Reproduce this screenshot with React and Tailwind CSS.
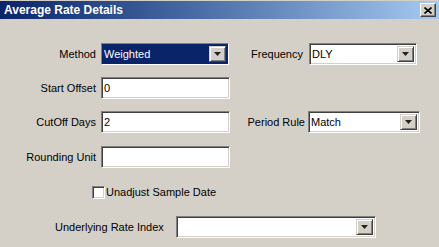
import React from "react";

const font = { fontFamily: '"Liberation Sans", Arial, sans-serif' };

const sunken =
  "border border-t-[#808080] border-l-[#808080] border-b-white border-r-white shadow-[inset_1px_1px_0_#404040,inset_-1px_-1px_0_#d4d0c8]";

const DropButton = () => (
  <div className="absolute right-[2px] top-[2px] bottom-[2px] w-[17px] bg-[#d4d0c8] border border-t-[#d4d0c8] border-l-[#d4d0c8] border-b-[#404040] border-r-[#404040] shadow-[inset_1px_1px_0_#fff,inset_-1px_-1px_0_#808080] flex items-center justify-center">
    <svg width="7" height="4" viewBox="0 0 7 4">
      <path d="M0 0h7L3.5 4z" fill="#222" />
    </svg>
  </div>
);

const Combo = ({ value, width, selected }) => (
  <div className={`relative h-[22px] bg-white ${sunken}`} style={{ width }}>
    <div
      className={`h-full flex items-center pl-[2px] pr-[20px] text-[11px] ${
        selected ? "bg-[#0a246a] text-white" : "text-black"
      }`}
    >
      {value}
    </div>
    <DropButton />
  </div>
);

const Input = ({ value }) => (
  <div className={`h-[22px] w-[129px] bg-white flex items-center pl-[2px] text-[11px] text-black ${sunken}`}>
    {value}
  </div>
);

const Label = ({ children, w }) => (
  <div className="text-[11px] text-black text-right shrink-0" style={{ width: w }}>
    {children}
  </div>
);

export default function App() {
  return (
    <div className="w-[439px] h-[247px] bg-[#d4d0c8] overflow-hidden" style={font}>
      <div className="h-[18px] mt-[1px] bg-gradient-to-r from-[#0a246a] to-[#a6caf0] flex items-center justify-between pl-[4px] pr-[3px]">
        <span className="text-white font-bold text-[12px] leading-none">Average Rate Details</span>
        <div className="w-[16px] h-[14px] bg-[#d4d0c8] border border-t-white border-l-white border-b-[#404040] border-r-[#404040] shadow-[inset_-1px_-1px_0_#808080] flex items-center justify-center">
          <svg width="8" height="7" viewBox="0 0 8 7">
            <path d="M0.5 0.5L7.5 6.5M7.5 0.5L0.5 6.5" stroke="#000" strokeWidth="1.6" />
          </svg>
        </div>
      </div>

      <div className="pt-[24px] flex flex-col">
        <div className="flex items-center h-[22px]">
          <Label w={96}>Method</Label>
          <div className="ml-[5px]">
            <Combo value="Weighted" width={128} selected />
          </div>
          <Label w={74}>Frequency</Label>
          <div className="ml-[6px]">
            <Combo value="DLY" width={108} />
          </div>
        </div>

        <div className="flex items-center h-[22px] mt-[12px]">
          <Label w={96}>Start Offset</Label>
          <div className="ml-[5px]">
            <Input value="0" />
          </div>
        </div>

        <div className="flex items-center h-[22px] mt-[12px]">
          <Label w={96}>CutOff Days</Label>
          <div className="ml-[5px]">
            <Input value="2" />
          </div>
          <Label w={75}>Period Rule</Label>
          <div className="ml-[3px]">
            <Combo value="Match" width={112} />
          </div>
        </div>

        <div className="flex items-center h-[22px] mt-[13px]">
          <Label w={96}>Rounding Unit</Label>
          <div className="ml-[5px]">
            <Input value="" />
          </div>
        </div>

        <div className="flex items-center h-[13px] mt-[18px] pl-[92px]">
          <div className={`w-[13px] h-[13px] bg-white ${sunken}`} />
          <span className="ml-[1px] text-[11px] text-black">Unadjust Sample Date</span>
        </div>

        <div className="flex items-center h-[22px] mt-[17px]">
          <div className="pl-[55px] w-[176px] text-[11px] text-black">Underlying Rate Index</div>
          <Combo value="" width={200} />
        </div>
      </div>
    </div>
  );
}
